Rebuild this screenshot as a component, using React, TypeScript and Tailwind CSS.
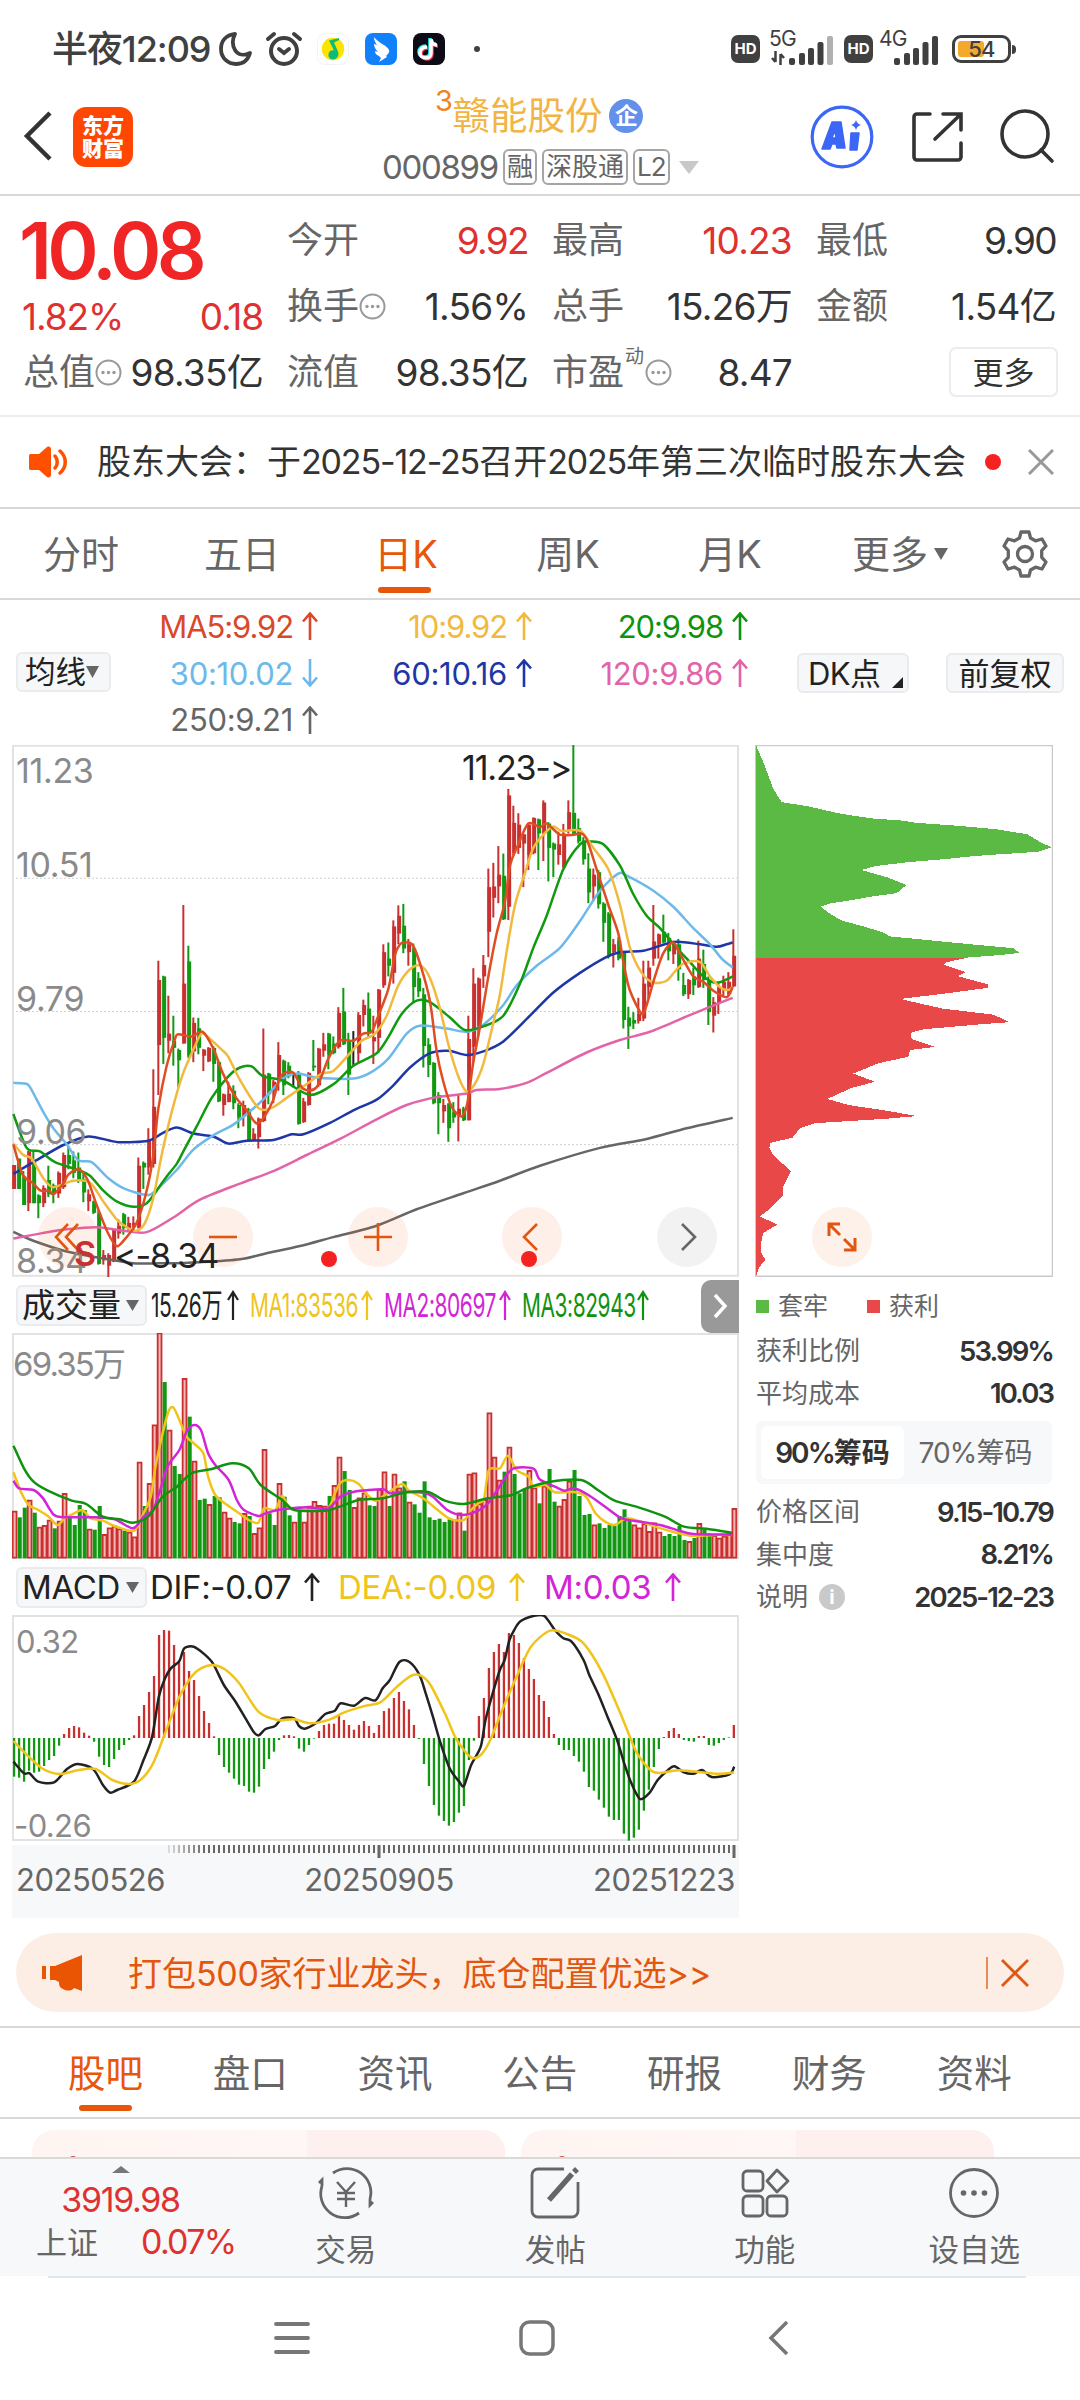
import type { ReactNode } from "react";

type Candle = [number, number, number?, number?];

const UP = "#c93030";
const DOWN = "#129812";

// r = up day, g = down day, k = flat
const CANDLE_SIDES = [
  "rggrggrggr", "rggggrggrr", "rrgrrrgrrr", "grggrgrgrr", "ggrrggrgrr",
  "rgrrggkgrr", "grrggrggkr", "rgrrrgrrgr", "ggggggrggr", "grrrrrrrgr",
  "rrrrrgrggr", "rrggggrggg", "rggggrrrrr", "ggrggrgrgg", "rrrrr",
].join("");

// high, low, body top, body bottom
const CANDLES: Candle[] = [
  [1218, 1285], [1200, 1285], [1235, 1330, 1250, 1330], [1178, 1347, 1180, 1325], [1180, 1325, 1210, 1325], [1300, 1367, 1303, 1325], [1275, 1336, 1282, 1325],
  [1220, 1308, 1260, 1300], [1270, 1325, 1275, 1300], [1236, 1310, 1240, 1298], [1183, 1285, 1190, 1280], [1165, 1230, 1190, 1215], [1180, 1255, 1205, 1240],
  [1183, 1268, 1225, 1262], [1240, 1322, 1258, 1295], [1286, 1347, 1300, 1320], [1318, 1355, 1322, 1352], [1345, 1497, 1355, 1495], [1456, 1497, 1470, 1485],
  [1465, 1532, 1470, 1500], [1395, 1490, 1400, 1488], [1370, 1424, 1388, 1410], [1352, 1413, 1356, 1395], [1363, 1400, 1380, 1395], [1362, 1400, 1380, 1392],
  [1197, 1395, 1220, 1395], [1208, 1285, 1212, 1225], [1115, 1245, 1150, 1225], [950, 1225, 1055, 1215], [646, 1022, 700, 882], [688, 935, 690, 862],
  [744, 905, 850, 870], [800, 940, 870, 890], [892, 1000, 896, 925], [490, 878, 710, 878], [604, 918, 648, 912], [805, 930, 820, 900], [806, 908, 835, 890],
  [893, 955, 895, 912], [888, 930, 890, 928], [885, 985, 890, 935], [925, 1042, 930, 1040], [1018, 1080, 1020, 1050], [985, 1042, 1018, 1042],
  [995, 1062, 1010, 1045], [1045, 1115, 1050, 1085], [1038, 1110, 1050, 1080], [1058, 1150, 1062, 1148], [1115, 1150, 1130, 1148], [1085, 1172, 1088, 1140],
  [836, 1098, 965, 1095], [960, 1048, 962, 1020], [980, 1045, 985, 1012], [874, 1010, 910, 982], [923, 1022, 926, 995], [930, 975, 940, 970], [960, 1000],
  [955, 1105, 960, 1103], [1030, 1100, 1040, 1098], [958, 1052, 960, 1050], [868, 955, 940, 945], [890, 1000, 892, 995], [848, 915, 880, 898],
  [848, 950, 850, 908], [858, 908, 878, 905], [776, 892, 792, 888], [722, 882, 788, 880], [848, 1022, 870, 965], [843, 940], [790, 935, 798, 905],
  [755, 830, 770, 798], [735, 862, 780, 850], [800, 935, 860, 872], [725, 905, 727, 862], [600, 722, 622, 715], [595, 690, 640, 660], [533, 710, 550, 680],
  [491, 600, 520, 570], [487, 625, 548, 612], [585, 660, 600, 622], [598, 765, 612, 720], [678, 748, 695, 732], [722, 945, 740, 885], [863, 972, 880, 938],
  [930, 1048, 932, 1045], [1014, 1132, 1022, 1045], [1033, 1100, 1050, 1068], [1045, 1153, 1046, 1115], [1042, 1100, 1070, 1085], [1022, 1152, 1060, 1080],
  [1055, 1095, 1060, 1093], [800, 1093, 865, 1093], [667, 930, 710, 887], [693, 858, 696, 830], [630, 722, 658, 690], [388, 636, 440, 565],
  [372, 525, 438, 470], [325, 485, 405, 438], [346, 532, 408, 530], [165, 532, 183, 495], [212, 350, 260, 345], [233, 347, 265, 330], [290, 440, 292, 318],
  [260, 392, 265, 350], [245, 348, 246, 345], [248, 392, 250, 290], [197, 367, 203, 290], [258, 424, 262, 330], [315, 412, 318, 335], [285, 377, 320, 350],
  [263, 387, 290, 385], [197, 290, 230, 282], [42, 297, 232, 290], [248, 318, 275, 312], [300, 377, 310, 362], [345, 485, 388, 455], [388, 478, 405, 438],
  [392, 500, 398, 488], [482, 593, 486, 540], [510, 640, 514, 630], [585, 665, 600, 622], [580, 645, 590, 640], [620, 836, 622, 812], [775, 893, 805, 830],
  [790, 837, 812, 822], [750, 822, 795, 815], [646, 815, 710, 808], [646, 752, 665, 720], [490, 660, 592, 640], [570, 640, 572, 600], [517, 597, 565, 595],
  [568, 645, 582, 620], [590, 655, 600, 628], [585, 702, 600, 670], [680, 745, 714, 740], [697, 753, 700, 740], [665, 742, 690, 715], [590, 722, 640, 720],
  [615, 722, 655, 700], [690, 826, 700, 790], [748, 847, 762, 800], [705, 795, 720, 765], [688, 748, 705, 728], [678, 745, 705, 740], [558, 720, 632, 718],
];

const PRICE_LINES = [
  { color: "#666666", pts: "40,1405 100,1430 200,1460 300,1478 400,1493 500,1493 600,1490 720,1482 800,1465 900,1445 1000,1420 1130,1388 1250,1342 1390,1297 1500,1262 1620,1220 1800,1170 1940,1145 2060,1115 2198,1086" },
  { color: "#e263a7", pts: "40,1424 130,1408 200,1398 290,1392 370,1402 440,1406 520,1365 600,1315 720,1270 820,1235 920,1190 1020,1145 1130,1090 1220,1050 1310,1028 1400,1018 1430,1008 1500,1005 1580,988 1640,960 1760,903 1860,868 1950,845 2060,802 2130,775 2198,750" },
  { color: "#1e36a6", pts: "40,1243 100,1210 190,1162 265,1138 355,1154 445,1150 485,1130 530,1113 580,1130 640,1138 685,1158 740,1150 820,1148 875,1132 910,1132 990,1100 1060,1065 1130,1035 1180,995 1230,945 1290,905 1345,898 1400,910 1450,900 1510,872 1590,800 1660,735 1740,680 1820,635 1860,622 1930,618 1980,604 2030,593 2100,600 2150,607 2180,600 2198,595" },
  { color: "#6cb9ea", pts: "40,988 75,990 90,1000 130,1070 160,1115 200,1160 235,1205 275,1210 325,1255 375,1285 445,1302 475,1282 530,1232 580,1175 640,1135 700,1105 760,1060 800,1025 850,975 895,962 950,973 1060,976 1110,960 1165,920 1220,850 1260,828 1340,836 1400,845 1450,825 1510,770 1550,715 1610,660 1680,610 1740,535 1800,450 1855,402 1880,408 1960,450 2020,495 2080,555 2130,600 2165,640 2198,665" },
  { color: "#109a0f", pts: "40,1075 80,1170 120,1180 165,1210 235,1232 270,1248 310,1290 350,1320 400,1335 440,1325 470,1290 500,1250 530,1215 550,1180 590,1110 635,1030 685,970 720,945 755,942 790,970 850,982 930,1022 1000,992 1060,940 1130,905 1165,860 1205,795 1250,758 1290,762 1350,805 1395,840 1450,830 1510,800 1560,710 1600,610 1640,520 1690,390 1740,320 1770,312 1810,320 1860,380 1900,460 1940,520 1980,555 2030,610 2070,650 2110,690 2150,708 2198,690" },
  { color: "#f2b93f", pts: "40,1158 70,1190 95,1200 130,1255 160,1280 220,1262 270,1268 310,1320 350,1370 385,1395 410,1402 435,1380 460,1310 485,1190 515,1070 548,965 580,895 605,850 630,865 665,895 685,915 720,980 775,1058 815,1058 860,1030 930,985 965,962 1000,955 1050,905 1085,870 1125,850 1160,800 1195,715 1230,670 1262,660 1290,695 1320,780 1345,880 1375,970 1400,1012 1425,990 1450,935 1480,820 1500,740 1520,620 1545,490 1575,400 1600,330 1635,288 1660,270 1685,283 1720,280 1745,285 1780,330 1825,390 1860,490 1890,610 1925,680 1960,707 2000,702 2030,670 2055,652 2100,650 2130,690 2160,720 2185,728 2198,720" },
  { color: "#df4d23", pts: "40,1160 68,1245 98,1268 122,1290 148,1290 160,1300 190,1270 205,1245 235,1230 262,1258 290,1330 322,1405 350,1445 375,1425 410,1380 440,1290 460,1190 475,1060 500,940 525,865 535,852 575,858 608,845 640,892 668,960 705,1025 740,1065 770,1102 795,1080 820,1035 835,985 850,962 880,960 910,1005 950,1000 985,920 1020,870 1060,870 1090,850 1115,845 1135,800 1165,725 1185,630 1200,600 1215,594 1238,602 1262,660 1290,760 1310,900 1330,985 1355,1055 1385,1082 1402,1045 1420,930 1440,830 1465,690 1490,570 1515,480 1530,380 1555,320 1585,262 1620,272 1640,262 1680,293 1720,293 1745,290 1762,310 1790,390 1825,490 1855,570 1872,660 1890,730 1925,795 1940,770 1965,690 1990,625 2020,595 2045,635 2080,690 2110,705 2140,730 2180,748 2198,720" },
];

const VOLUME =
  "r695 g712 g683 r662 g698 r743 r738 r722 g745 r725 r642 g712 g735 g675 g690 r749 g749 g678 r765 r745 r740 r748 g752 r758 r772 r548 g678 r612 r436 r160 g306 r452 g558 g582 r297 g410 r545 g660 g656 r675 g648 g652 r698 r716 g726 g730 r702 g708 r762 r745 r510 g700 g735 r612 g650 g706 r728 g680 r728 r680 r666 r678 r680 g648 r618 r533 g573 g630 r684 r655 r640 g676 g678 r630 r577 g678 r584 r625 g604 r668 g673 g698 g604 g712 g720 g716 g726 g718 r720 r700 g752 r584 r580 r672 r660 r400 r533 r602 g575 r503 g582 g640 g628 r573 r625 g670 r620 g567 g665 r680 r660 r605 g570 g648 g705 g702 r736 g730 g744 g735 g738 g708 g688 g715 r736 r745 r732 r756 r730 r758 g768 g762 g768 g738 g780 r786 g774 r732 g748 g760 r768 r776 r770 r760 r687".split(" ");

const VOLUME_LINES = [
  { color: "#f0c419", pts: "28,577 45,640 60,675 80,690 100,708 120,735 135,715 155,700 172,690 190,715 215,722 240,738 280,752 300,700 315,650 325,560 340,460 352,395 362,382 375,420 390,470 405,490 425,520 435,590 450,645 475,675 500,700 520,720 540,728 552,685 575,690 590,648 605,682 640,690 685,685 700,640 712,608 730,600 750,612 765,640 785,662 805,645 840,612 855,632 885,655 905,678 940,716 970,720 985,690 1000,670 1012,655 1022,570 1045,565 1062,527 1080,570 1105,590 1115,620 1140,615 1160,637 1200,636 1225,650 1245,700 1265,725 1285,735 1310,715 1340,725 1370,740 1410,757 1450,768 1500,764 1530,765" },
  { color: "#d224d8", pts: "28,602 40,625 70,630 90,655 105,690 122,710 200,712 240,718 278,745 300,710 320,690 335,630 350,560 375,510 390,455 405,435 420,450 435,520 450,555 478,600 495,660 510,690 540,708 555,700 590,688 640,682 685,685 712,650 740,635 800,628 815,640 840,636 885,638 905,650 935,690 965,705 1000,692 1020,670 1040,630 1070,568 1115,566 1128,598 1160,620 1180,632 1200,625 1230,645 1265,680 1300,715 1340,725 1380,735 1420,752 1450,762 1530,764" },
  { color: "#0f930f", pts: "28,497 50,565 70,605 100,632 150,662 180,672 215,710 250,718 278,728 310,710 340,650 370,620 400,580 440,568 485,550 520,565 545,615 590,660 615,690 680,692 710,680 750,660 800,655 850,637 895,636 930,662 970,672 1020,655 1070,645 1100,625 1150,605 1215,600 1250,630 1285,662 1330,680 1390,710 1430,740 1480,747 1530,758" },
];

const MACD_BARS = [
  650, 653, 665, 632, 638, 635, 618, 600, 588, 557, 522, 504, 498, 502, 518, 527, 545, 590, 615, 621, 597, 570, 555, 540, 526, 468, 435, 396, 348, 225,
  210, 212, 255, 305, 276, 333, 360, 408, 453, 489, 529, 585, 621, 638, 656, 674, 678, 695, 698, 680, 627, 597, 575, 540, 526, 525, 529, 566, 575, 555,
  536, 513, 495, 491, 491, 468, 480, 495, 509, 495, 483, 498, 519, 495, 453, 445, 414, 396, 423, 448, 495, 537, 612, 678, 735, 767, 783, 797, 786, 758,
  738, 600, 542, 468, 414, 324, 276, 252, 276, 219, 225, 249, 294, 327, 357, 405, 423, 471, 522, 555, 570, 570, 588, 605, 635, 681, 692, 719, 743, 770,
  780, 780, 821, 842, 833, 809, 752, 689, 621, 567, 531, 513, 504, 522, 540, 543, 545, 528, 528, 555, 557, 549, 540, 532, 495,
];

const MACD_LINES = [
  { color: "#222222", pts: "28,605 50,640 62,640 80,665 113,667 140,627 163,612 195,628 215,675 230,698 245,690 280,665 300,600 318,530 332,410 345,355 357,325 375,303 385,265 405,260 425,280 445,310 468,375 490,420 512,472 530,515 541,526 555,507 575,498 590,475 615,475 625,498 637,506 660,490 680,462 700,452 712,430 740,437 763,414 785,421 800,385 815,360 835,306 856,306 877,345 890,400 905,470 920,545 940,625 960,665 970,677 985,615 1005,560 1015,480 1030,400 1045,330 1055,300 1065,240 1075,210 1088,184 1115,168 1138,168 1160,210 1178,235 1195,245 1220,300 1232,345 1250,400 1270,470 1290,540 1305,610 1320,670 1338,717 1357,700 1375,660 1395,632 1410,619 1430,637 1450,641 1468,630 1488,651 1525,643 1535,620" },
  { color: "#f0c419", pts: "28,543 60,590 90,627 125,642 165,630 200,627 235,660 270,672 295,658 320,610 345,520 375,410 400,350 420,325 445,315 470,328 500,370 540,455 580,480 615,478 650,490 690,478 720,457 765,437 795,427 830,380 860,347 880,347 900,375 930,460 955,540 985,592 1005,585 1025,540 1050,450 1080,350 1110,260 1150,212 1185,222 1220,250 1260,340 1300,470 1330,575 1360,630 1380,639 1420,631 1500,641 1535,637" },
];

// catmull-rom through the points
function smooth(pts: string): string {
  const p = pts.split(" ").map((s) => s.split(",").map(Number));
  let d = `M${p[0][0]} ${p[0][1]}`;
  for (let i = 0; i < p.length - 1; i++) {
    const a = p[i - 1] ?? p[i];
    const b = p[i];
    const c = p[i + 1];
    const e = p[i + 2] ?? c;
    d += `C${b[0] + (c[0] - a[0]) / 7} ${b[1] + (c[1] - a[1]) / 7} ${c[0] - (e[0] - b[0]) / 7} ${c[1] - (e[1] - b[1]) / 7} ${c[0]} ${c[1]}`;
  }
  return d;
}

function Lines({ items }: { items: { color: string; pts: string }[] }) {
  return (
    <>
      {items.map((l) => (
        <path key={l.color} d={smooth(l.pts)} fill="none" stroke={l.color} strokeWidth="2.500" strokeLinejoin="round" vectorEffect="non-scaling-stroke" />
      ))}
    </>
  );
}

function Arrow({ down = false }: { down?: boolean }) {
  return (
    <svg width="16" height="28" viewBox="0 0 16 28" fill="none" stroke="currentColor" strokeWidth="2.600" className={down ? "rotate-180 shrink-0" : "shrink-0"}>
      <path d="M8 28V2M1 9.500 8 1.500 15 9.500" />
    </svg>
  );
}

function MoreDots() {
  return (
    <svg width="27" height="27" viewBox="0 0 27 27" className="shrink-0">
      <circle cx="13.500" cy="13.500" r="12" fill="none" stroke="#999" strokeWidth="2" />
      <g fill="#999">
        <circle cx="8" cy="13.500" r="1.700" />
        <circle cx="13.500" cy="13.500" r="1.700" />
        <circle cx="19" cy="13.500" r="1.700" />
      </g>
    </svg>
  );
}

function Signal({ weak = false }: { weak?: boolean }) {
  return (
    <svg width="44" height="29" viewBox="0 0 44 29" fill="#404040">
      <rect x="0" y="22" width="6" height="7" rx="2" />
      <rect x="10" y="17" width="6" height="12" rx="2" />
      <rect x="19" y="12" width="6" height="17" rx="2" />
      <rect x="28.500" y="6" width="6" height="23" rx="2" />
      <rect x="38" y="0" width="6" height="29" rx="2" fill={weak ? "#b0b0b0" : "#404040"} />
    </svg>
  );
}

function StatusBar() {
  return (
    <div className="relative h-[84px] flex items-center pt-[14px] pl-[52px] text-[#404040]">
      <span className="text-[36px] font-medium tracking-[-0.03em] w-[166px] whitespace-nowrap">半夜12:09</span>
      <svg width="34" height="36" viewBox="0 0 34 36" fill="none" stroke="#404040" strokeWidth="3.800" strokeLinejoin="round">
        <path d="M17 3C8 4 3 10 3 18c0 9 7 15 15 15 7 0 12-4 14-11-6 3-12 2-15-3-3-5-3-10 0-16z" />
      </svg>
      <svg width="38" height="38" viewBox="0 0 38 38" fill="none" stroke="#404040" strokeWidth="4" strokeLinecap="round" className="ml-[13px]">
        <circle cx="19" cy="21" r="13" />
        <path d="M3 9 9 4M35 9 29 4M14 19l5 4 5-4" />
      </svg>
      <svg width="32" height="32" viewBox="0 0 32 32" className="ml-[14px]">
        <rect x=".5" y=".5" width="31" height="31" rx="8" fill="#fff" stroke="#f3f3f3" />
        <circle cx="16" cy="16" r="11.200" fill="#fce300" />
        <path d="M12 7.500 22 5v2l-5 2.500 4 9c1.500 4-1 8-5 8s-5.500-4-4-7c1-2 3-2.500 5-2l-3-6z" fill="#0dbb78" />
      </svg>
      <svg width="32" height="32" viewBox="0 0 32 32" className="ml-[16px]">
        <rect width="32" height="32" rx="8" fill="#1180fb" />
        <path d="M9 4c4 6 13 8 15 13 1 2-1 4-3 6l1 1-8 5 2-4-2-2c-3-1-4-3-4-5l3 1c-3-3-4-6-4-8l3 1c-2-3-3-5-3-8z" fill="#fff" />
      </svg>
      <svg width="32" height="32" viewBox="0 0 32 32" className="ml-[16px]">
        <rect width="32" height="32" rx="8" fill="#0d0b16" />
        <g fill="none" strokeWidth="3.600">
          <path d="M14 14c-5 0-7 3-7 6s3 5 6 5 5-2 5-5V6c0 4 3 6 6 6" stroke="#29ece9" transform="translate(-1 -1)" />
          <path d="M14 14c-5 0-7 3-7 6s3 5 6 5 5-2 5-5V6c0 4 3 6 6 6" stroke="#fb2c55" transform="translate(1 1)" />
          <path d="M14 14c-5 0-7 3-7 6s3 5 6 5 5-2 5-5V6c0 4 3 6 6 6" stroke="#fff" />
        </g>
      </svg>
      <span className="ml-[29px] size-[6px] rounded-full bg-[#404040]" />

      <div className="ml-auto mr-[69px] flex items-center">
        <span className="w-[29px] h-[28px] rounded-[7px] bg-[#404040] text-white text-[15px] font-bold flex items-center justify-center">HD</span>
        <div className="relative ml-[11px] w-[62px] h-[32px] flex items-end justify-end">
          <span className="absolute -left-0.5 top-[-5px] text-[21px] leading-[22px] tracking-[-0.04em]">5G</span>
          <svg width="14" height="14" viewBox="0 0 14 14" fill="none" stroke="#404040" strokeWidth="2.500" className="absolute left-0 bottom-0">
            <path d="M4.500 0v11M1 7l3.500 4M9.500 14V3M13 7 9.500 3" />
          </svg>
          <Signal weak />
        </div>
        <span className="ml-[11px] w-[29px] h-[28px] rounded-[7px] bg-[#404040] text-white text-[15px] font-bold flex items-center justify-center">HD</span>
        <div className="relative ml-[6px] w-[59px] h-[32px] flex items-end justify-end">
          <span className="absolute left-0 top-[-5px] text-[21px] leading-[22px] tracking-[-0.04em]">4G</span>
          <Signal />
        </div>
        <div className="relative ml-[14px] w-[59px] h-[28px] rounded-[9px] border-[3px] border-[#404040] p-[3px]">
          <div className="w-[26px] h-[16px] rounded-[3px] bg-[#f3a92c]" />
          <span className="absolute inset-0 flex items-center justify-center text-[22px] leading-none font-medium tracking-[-0.04em]">54</span>
          <span className="absolute right-[-8px] top-[7px] w-[4px] h-[9px] rounded-r bg-[#404040]" />
        </div>
      </div>
    </div>
  );
}

function Tag({ children }: { children: ReactNode }) {
  return <span className="h-[36px] px-[2px] border-2 border-[#a5a5a5] rounded-[6px] text-[26px] leading-[31px] text-[#666]">{children}</span>;
}

function Header() {
  return (
    <header className="h-[112px] border-b-2 border-[#d9d9d9] flex items-start">
      <svg width="30" height="50" viewBox="0 0 30 50" fill="none" stroke="#333" strokeWidth="4.500" className="ml-[23px] mt-[27px]">
        <path d="M27 2 4 25l23 23" />
      </svg>
      <div className="ml-[20px] mt-[23px] size-[60px] rounded-[13px] bg-[#ff4603] text-white text-[21px] leading-[23px] font-black flex flex-col items-center justify-center">
        <span>东方</span>
        <span>财富</span>
      </div>
      <div className="ml-[237px] w-[330px]">
        <div className="flex items-center h-[52px] pl-[67px] pt-[12px]">
          <span className="text-[29px] leading-none text-[#ee8420] -translate-y-[16px] -ml-[2px] mr-[1px] tracking-tighter">3</span>
          <span className="text-[37.500px] leading-none text-[#f2b544]">赣能股份</span>
          <span className="ml-[7px] size-[34px] rounded-full bg-[#6290ea] text-white text-[23px] leading-none font-bold flex items-center justify-center">企</span>
        </div>
        <div className="flex items-center gap-[5px] mt-[13px] pl-[12px] whitespace-nowrap">
          <span className="text-[33px] leading-none text-[#666] tracking-[-0.04em] w-[116px]">000899</span>
          <Tag>融</Tag>
          <Tag>深股通</Tag>
          <Tag>
            <span className="tracking-[-0.04em]">L2</span>
          </Tag>
          <svg width="20" height="13" viewBox="0 0 20 13" className="ml-[4px]">
            <path d="M0 0h20L10 13z" fill="#c8c8c8" />
          </svg>
        </div>
      </div>
      <svg width="64" height="64" viewBox="0 0 64 64" fill="none" className="ml-[110px] mt-[21px]">
        <circle cx="32" cy="32" r="29.800" stroke="#3c66f5" strokeWidth="3.200" />
        <path fillRule="evenodd" d="M22 17h9l4 26h-8l-1-4h-4l-2 5h-8zM25 25l-3 8h4z" fill="#3c66f5" stroke="#3c66f5" strokeWidth="1.500" strokeLinejoin="round" />
        <path d="M41 28h8l-2 17h-7z" fill="#3c66f5" stroke="#3c66f5" strokeWidth="1.500" strokeLinejoin="round" />
        <path d="M46 15c1 3 2 4 5 5-3 1-4 2-5 5-1-3-2-4-5-5 3-1 4-2 5-5z" fill="#3c66f5" />
      </svg>
      <svg width="54" height="54" viewBox="0 0 54 54" fill="none" stroke="#333" strokeWidth="3.600" strokeLinecap="round" className="ml-[36px] mt-[26px]">
        <path d="M20 4H7a3 3 0 0 0-3 3v40a3 3 0 0 0 3 3h41a3 3 0 0 0 3-3V33M33 4h18v16M50 5 25 29" />
      </svg>
      <svg width="56" height="56" viewBox="0 0 56 56" fill="none" stroke="#333" strokeWidth="3.600" strokeLinecap="round" className="ml-[35px] mt-[25px]">
        <circle cx="26" cy="25" r="23" />
        <path d="M42 41l11 11" />
      </svg>
    </header>
  );
}

function Stat({ label, value, red = false, dots = false }: { label: ReactNode; value: string; red?: boolean; dots?: boolean }) {
  return (
    <div className="flex items-center justify-between h-[66px] whitespace-nowrap">
      <span className="text-[36px] text-[#666] flex items-center -ml-[1px]">
        {label}
        {dots && <MoreDots />}
      </span>
      <span className={`text-[37px] ${value.includes("9.9") ? "tracking-[-0.045em]" : "tracking-[-0.02em]"} ${red ? "text-[#e03131]" : "text-[#333]"}`}>{value}</span>
    </div>
  );
}

function Quote() {
  return (
    <section className="h-[221px] border-b-2 border-[#ededed] pl-[24px] pr-[24px] pt-[11px] grid grid-cols-[239px_240px_239px_239px] gap-x-[25px] content-start leading-none">
      <div>
        <div className="h-[87px] -ml-[5px] flex items-center text-[78px] font-semibold text-[#f02525] tracking-[-0.06em]">10.08</div>
        <div className="h-[45px] -ml-[2px] flex items-center justify-between text-[37px] text-[#e03131] tracking-[-0.03em]">
          <span>1.82%</span>
          <span>0.18</span>
        </div>
        <Stat label="总值" value="98.35亿" dots />
      </div>
      <div>
        <Stat label="今开" value="9.92" red />
        <Stat label="换手" value="1.56%" dots />
        <Stat label="流值" value="98.35亿" />
      </div>
      <div>
        <Stat label="最高" value="10.23" red />
        <Stat label="总手" value="15.26万" />
        <Stat
          label={
            <>
              市盈
              <span className="text-[19px] -translate-y-[16px] mx-[1px]">动</span>
            </>
          }
          value="8.47"
          dots
        />
      </div>
      <div>
        <Stat label="最低" value="9.90" />
        <Stat label="金额" value="1.54亿" />
        <div className="h-[66px] flex items-center justify-end">
          <span className="w-[109px] h-[50px] border-2 border-[#ececec] rounded-[7px] flex items-center justify-center text-[31px] text-[#333] -mr-[2px]">更多</span>
        </div>
      </div>
    </section>
  );
}

function News() {
  return (
    <section className="h-[92px] border-b-2 border-[#d9d9d9] flex items-center leading-none">
      <svg width="40" height="32" viewBox="0 0 40 32" className="ml-[29px]">
        <path d="M2 8h8L18 1c2-1 4 0 4 2v26c0 2-2 3-4 2l-8-7H2c-2 0-2-1-2-2V10c0-1 0-2 2-2z" fill="#ff5000" />
        <path d="M26 10c3 3 3 9 0 12M31 5c7 6 7 16 0 22" fill="none" stroke="#ff5000" strokeWidth="3.500" strokeLinecap="round" />
      </svg>
      <span className="ml-[28px] w-[871px] text-[34px] text-[#333] whitespace-nowrap">
        股东大会：于<span className="tracking-[-0.034em]">2025-12-25</span>召开<span className="tracking-[-0.034em]">2025</span>年第三次临时股东大会
      </span>
      <span className="ml-[17px] size-[16px] rounded-full bg-[#f52222]" />
      <svg width="26" height="26" viewBox="0 0 26 26" fill="none" stroke="#999" strokeWidth="3" className="ml-[27px]">
        <path d="M1 1l24 24M25 1 1 25" />
      </svg>
    </section>
  );
}

function PeriodTabs() {
  return (
    <nav className="relative h-[91px] border-b-2 border-[#d9d9d9] flex items-center text-[38px] leading-none text-[#666]">
      <span className="w-[162px] text-center">分时</span>
      <span className="w-[160px] text-center">五日</span>
      <span className="relative w-[168px] text-center text-[#e8560a]">
        日K
        <i className="absolute left-[56px] -bottom-[20px] w-[53px] h-[6px] rounded-full bg-[#e8560a]" />
      </span>
      <span className="w-[156px] text-center">周K</span>
      <span className="w-[168px] text-center">月K</span>
      <span className="ml-[38px]">更多</span>
      <svg width="14" height="12" viewBox="0 0 14 12" className="ml-[6px]">
        <path d="M0 0h14L7 12z" fill="#666" />
      </svg>
      <svg width="50" height="50" viewBox="0 0 50 50" fill="none" stroke="#666" strokeWidth="3.300" strokeLinejoin="round" className="ml-[52px]">
        <path d="M21 3h8l1.500 6 5 2.800L42 10l4 7-4.300 4.700v6.600L46 33l-4 7-6.500-1.800-5 2.800-1.500 6h-8l-1.500-6-5-2.800L8 40l-4-7 4.300-4.700v-6.600L4 17l4-7 6.500 1.800 5-2.800z" />
        <circle cx="25" cy="25" r="7.500" />
      </svg>
    </nav>
  );
}

function MaValue({ text, color, down = false }: { text: string; color: string; down?: boolean }) {
  return (
    <span className={`flex items-center justify-end gap-[9px] h-[46.700px] ${text.includes("9.9") ? "tracking-[-0.035em]" : "tracking-[-0.01em]"} ${color}`}>
      {text}
      <Arrow down={down} />
    </span>
  );
}

function MaBar() {
  return (
    <section className="relative h-[145px] pt-[3px] flex text-[31px] leading-none whitespace-nowrap">
      <button className="ml-[16px] mt-[49px] w-[95px] h-[40px] rounded-[6px] border-2 border-[#e9ebee] bg-[#f6f7f9] text-[#222] flex items-center pl-[7px]">
        <span className="text-[30.500px] leading-none">均线</span>
        <svg width="13" height="12" viewBox="0 0 13 12">
          <path d="M0 0h13L6.500 12z" fill="#666" />
        </svg>
      </button>
      <div className="grid grid-cols-[207px_214px_216px] content-start">
        <MaValue text="MA5:9.92" color="text-[#d9482b]" />
        <MaValue text="10:9.92" color="text-[#f2b93f]" />
        <MaValue text="20:9.98" color="text-[#0f930f]" />
        <MaValue text="30:10.02" color="text-[#6cb9ea]" down />
        <MaValue text="60:10.16" color="text-[#1e36a6]" />
        <MaValue text="120:9.86" color="text-[#e263a7]" />
        <MaValue text="250:9.21" color="text-[#666]" />
      </div>
      <button className="relative ml-[49px] mt-[50px] w-[112px] h-[40px] rounded-[6px] border-2 border-[#e9ebee] bg-[#f6f7f9] text-[#222] pl-[9px] text-left">
        <span className="tracking-[-0.02em]">DK点</span>
        <svg width="11" height="11" viewBox="0 0 11 11" className="absolute right-[4px] bottom-[3px]">
          <path d="M11 0v11H0z" fill="#222" />
        </svg>
      </button>
      <button className="ml-[37px] mt-[50px] w-[118px] h-[40px] rounded-[6px] border-2 border-[#e9ebee] bg-[#f6f7f9] text-[#222]">前复权</button>
    </section>
  );
}

function RoundButton({ children, className }: { children: ReactNode; className: string }) {
  return (
    <button className={`absolute top-[462px] size-[60px] rounded-full flex items-center justify-center ${className}`}>
      <svg width="32" height="32" viewBox="0 0 32 32" fill="none" stroke="currentColor" strokeWidth="2.600">
        {children}
      </svg>
    </button>
  );
}

function PriceChart() {
  return (
    <div className="relative h-[532px] text-[34px] leading-none tracking-[-0.01em]">
      <svg className="absolute inset-0 size-full" viewBox="36 42 2181 1489.600" preserveAspectRatio="none">
        <g stroke="#cfcfcf" strokeDasharray="2 2">
          {[415, 788, 1161].map((y) => (
            <line key={y} x1="36" x2="2217" y1={y} y2={y} vectorEffect="non-scaling-stroke" />
          ))}
        </g>
        <rect x="39" y="44" width="2175" height="1484" fill="none" stroke="#e2e2e2" strokeWidth="2" vectorEffect="non-scaling-stroke" />
        {CANDLES.map(([high, low, top = high, bottom = low], i) => {
          const x = 37 + i * 15;
          const side = CANDLE_SIDES[i];
          const fill = side === "k" ? "#222" : side === "r" ? UP : DOWN;
          return (
            <g key={i} fill={fill}>
              <rect x={x} y={high} width="6" height={low - high} />
              {side !== "k" && <rect x={x} y={top} width="11.500" height={bottom - top} />}
            </g>
          );
        })}
        <Lines items={PRICE_LINES} />
      </svg>
      <div className="absolute left-[4px] top-[9px] text-[#8a8a8a]">
        <p className="h-[94px]">11.23</p>
        <p className="h-[134px]">10.51</p>
        <p className="h-[133px]">9.79</p>
        <p className="h-[129px]">9.06</p>
        <p>8.34</p>
      </div>
      <span className="absolute left-[450px] top-[6px] text-[#222] tracking-[-0.035em]">11.23-&gt;</span>
      <RoundButton className="left-[26px] bg-[#f5651b]/10 text-[#e2570f]">
        <path d="M16 3 4 16l12 13M26 3 14 16l12 13" />
      </RoundButton>
      <RoundButton className="left-[181px] bg-[#f5651b]/10 text-[#e2570f]">
        <path d="M2 16h28" />
      </RoundButton>
      <RoundButton className="left-[336px] bg-[#f5651b]/10 text-[#e2570f]">
        <path d="M2 16h28M16 2v28" />
      </RoundButton>
      <RoundButton className="left-[490px] bg-[#f5651b]/10 text-[#e2570f]">
        <path d="M21 3 8 16l13 13" />
      </RoundButton>
      <RoundButton className="left-[645px] bg-black/5 text-[#666]">
        <path d="M11 3l13 13-13 13" />
      </RoundButton>
      <span className="absolute left-[62px] top-[492px] text-[34px] font-semibold text-[#c93030]">S</span>
      <span className="absolute left-[102px] top-[494px] text-[#222] tracking-[-0.03em]">&lt;-8.34</span>
      <i className="absolute left-[309px] top-[506px] size-[16px] rounded-full bg-[#f52222]" />
      <i className="absolute left-[509px] top-[506px] size-[16px] rounded-full bg-[#f52222]" />
    </div>
  );
}

function Squeezed({ text, color, className }: { text: string; color: string; className: string }) {
  return (
    <span className={`flex items-center justify-between ${className} ${color}`}>
      <span className="w-0 scale-x-[0.635] origin-left tracking-[-0.02em]">
        <span className="block w-max">{text}</span>
      </span>
      <svg width="12" height="30" viewBox="0 0 12 30" fill="none" stroke="currentColor" strokeWidth="2.200">
        <path d="M6 30V2M1 10l5-8 5 8" />
      </svg>
    </span>
  );
}

function IndicatorSelect({ name }: { name: string }) {
  return (
    <button className="ml-[4px] w-[131px] h-[41px] rounded-[6px] border-2 border-[#e9ebee] bg-[#f6f7f9] text-[#222] flex items-center justify-between pl-[4px] pr-[6px]">
      {name}
      <svg width="13" height="11" viewBox="0 0 13 11">
        <path d="M0 0h13L6.500 11z" fill="#666" />
      </svg>
    </button>
  );
}

function VolumeChart() {
  return (
    <>
      <div className="h-[56px] flex items-center text-[33px] leading-none text-[#222] whitespace-nowrap">
        <IndicatorSelect name="成交量" />
        <Squeezed text="15.26万" color="text-[#222]" className="ml-[4px] w-[88px]" />
        <Squeezed text="MA1:83536" color="text-[#f0c419]" className="ml-[11px] w-[123px]" />
        <Squeezed text="MA2:80697" color="text-[#d224d8]" className="ml-[11px] w-[127px]" />
        <Squeezed text="MA3:82943" color="text-[#0f930f]" className="ml-[11px] w-[127px]" />
        <div className="ml-auto mt-[2px] w-[38px] h-[53px] rounded-l-[10px] bg-[#999] flex items-center justify-center">
          <svg width="16" height="34" viewBox="0 0 16 34" fill="none" stroke="#fff" strokeWidth="3.500">
            <path d="M3 6l10 11L3 28" />
          </svg>
        </div>
      </div>
      <div className="relative h-[226px]">
        <svg className="absolute inset-0 size-full" viewBox="25 159 1520 678" preserveAspectRatio="none">
          <rect x="27" y="162" width="1516" height="672" fill="none" stroke="#e2e2e2" strokeWidth="2" vectorEffect="non-scaling-stroke" />
          {VOLUME.map((v, i) => {
            const x = 30 + i * 10.45;
            const y = Number(v.slice(1));
            return v[0] === "r" ? (
              <rect key={i} x={x - 3.5} y={y} width="8" height={833 - y} fill="#f6b9b7" stroke={UP} strokeWidth="1.800" vectorEffect="non-scaling-stroke" />
            ) : (
              <rect key={i} x={x - 3.5} y={y} width="8.500" height={835 - y} fill="#129812" />
            );
          })}
          <Lines items={VOLUME_LINES} />
        </svg>
        <span className="absolute left-[1px] top-[15px] text-[33px] leading-none tracking-[-0.055em] text-[#8a8a8a]">69.35万</span>
      </div>
    </>
  );
}

function MacdChart() {
  return (
    <>
      <div className="h-[56px] flex items-center text-[33px] leading-none text-[#222] whitespace-nowrap tracking-[-0.01em]">
        <IndicatorSelect name="MACD" />
        <span className="ml-[3px] w-[170px] flex items-center justify-between">
          DIF:-0.07
          <Arrow />
        </span>
        <span className="ml-[18px] w-[187px] flex items-center justify-between text-[#f0c419]">
          DEA:-0.09
          <Arrow />
        </span>
        <span className="ml-[19px] w-[137px] flex items-center justify-between text-[#d224d8]">
          M:0.03
          <Arrow />
        </span>
      </div>
      <div className="relative h-[226px] text-[31px] leading-none tracking-[-0.02em] text-[#8a8a8a]">
        <svg className="absolute inset-0 size-full" viewBox="25 165 1520 678" preserveAspectRatio="none">
          <rect x="27" y="168" width="1516" height="672" fill="none" stroke="#e2e2e2" strokeWidth="2" vectorEffect="non-scaling-stroke" />
          {MACD_BARS.map((y, i) => (
            <rect key={i} x={27 + i * 10.45} y={Math.min(y, 534)} width="4.800" height={Math.abs(y - 534)} fill={y < 534 ? UP : DOWN} />
          ))}
          <Lines items={MACD_LINES} />
        </svg>
        <span className="absolute left-[4px] top-[11px]">0.32</span>
        <span className="absolute left-[2px] top-[195px]">-0.26</span>
      </div>
    </>
  );
}

function DateAxis() {
  return (
    <div className="mt-[4px] h-[73px] bg-[#f7f8fa] text-[#666] text-[31px] leading-none tracking-[-0.015em]">
      <svg width="727" height="14" viewBox="12 0 727 14" stroke="#666" strokeWidth="2">
        {Array.from({ length: 114 }, (_, i) => {
          const x = 734 - i * 5;
          const major = i === 0 || i === 71;
          return <line key={i} x1={x} x2={x} y1="0" y2={major ? 13 : 8} opacity={Math.min(1, (x - 160) / 45)} strokeWidth={major ? 3 : 2} />;
        })}
      </svg>
      <div className="flex justify-between pl-[4px] pr-[4px] pt-[5px]">
        <span>20250526</span>
        <span>20250905</span>
        <span>20251223</span>
      </div>
    </div>
  );
}

function ChipRow({ label, value }: { label: ReactNode; value: string }) {
  return (
    <div className="h-[42.500px] flex items-center justify-between">
      <span className="flex items-center text-[26px] text-[#666] ml-[1px]">{label}</span>
      <span className="text-[27.500px] font-semibold text-[#333] tracking-[-0.07em]">{value}</span>
    </div>
  );
}

function Chips() {
  return (
    <div className="ml-[16px] w-[298px] leading-none">
      <div className="relative h-[532px]">
        <svg className="absolute inset-0 size-full" viewBox="45 42 894 1489.600" preserveAspectRatio="none">
          <rect x="46.500" y="43.500" width="891" height="1486" fill="none" stroke="#c9c9c9" strokeWidth="1.500" vectorEffect="non-scaling-stroke" />
          <g shapeRendering="crispEdges">
            <path fill="#5aba43" d="M48 42 72 95 100 165 125 202 200 213 305 235 400 248 480 253 530 260 650 268 770 278 862 292 908 318 936 328 896 341 745 350 680 355 620 361 505 370 450 376 405 381 365 392 440 412 499 434 470 457 405 465 335 476 270 486 242 495 275 518 310 535 375 551 432 568 450 578 550 587 670 598 820 611 838 624 780 630 685 637H48z" />
            <path fill="#e84848" d="M48 637H685L620 650 612 658 678 678 652 689 743 712 743 722 606 739 480 753 550 768 608 780 760 797 809 818 735 823 550 838 512 848 515 865 586 887 510 896 505 915 415 933 340 962 405 985 335 1002 262 1033 325 1050 440 1066 530 1081 445 1088 225 1101 180 1115 157 1142 90 1156 88 1170 100 1190 153 1236 128 1280 130 1302 90 1340 60 1362 112 1385 70 1408 62 1440 64 1465 77 1484 58 1503 48 1530z" />
          </g>
        </svg>
        <button className="absolute left-[57px] top-[462px] size-[60px] rounded-full bg-[#fef1ea] flex items-center justify-center">
          <svg width="32" height="32" viewBox="0 0 32 32" fill="none" stroke="#e2570f" strokeWidth="3">
            <path d="M14 3H3v12M3 3l11 11M18 29h11V17M29 29 18 18" />
          </svg>
        </button>
      </div>
      <div className="h-[53px] flex items-center text-[25px] text-[#666] pt-[5px]">
        <i className="ml-[1px] size-[13px] bg-[#5aba43]" />
        <span className="ml-[9px]">套牢</span>
        <i className="ml-[39px] size-[13px] bg-[#e84848]" />
        <span className="ml-[9px]">获利</span>
      </div>
      <ChipRow label="获利比例" value="53.99%" />
      <ChipRow label="平均成本" value="10.03" />
      <div className="mt-[6px] mb-[7px] ml-[1px] w-[296px] h-[63px] rounded-[6px] bg-[#f7f8fa] p-[5px] flex text-[28px] whitespace-nowrap">
        <span className="w-[143px] h-[53px] rounded-[6px] bg-white font-semibold text-[#333] flex items-center justify-center">
          <span className="tracking-[-0.07em]">90%</span>筹码
        </span>
        <span className="flex-1 flex items-center justify-center text-[#666]">
          <span className="tracking-[-0.03em]">70%</span>筹码
        </span>
      </div>
      <ChipRow label="价格区间" value="9.15-10.79" />
      <ChipRow label="集中度" value="8.21%" />
      <ChipRow
        label={
          <>
            说明
            <i className="ml-[11px] size-[26px] rounded-full bg-[#c9c9c9] text-white text-[20px] font-bold not-italic flex items-center justify-center">i</i>
          </>
        }
        value="2025-12-23"
      />
    </div>
  );
}

function Banner() {
  return (
    <section className="mx-[16px] mt-[15px] h-[79px] shrink-0 rounded-full bg-[#fceee4] flex items-center text-[#e2570f] leading-none">
      <svg width="40" height="36" viewBox="0 0 40 36" fill="#ea5504" className="ml-[26px]">
        <path d="M0 11h4v13H0zM8 11h5L40 0v36l-8-3c-2 3-6 3-9 2l-4-2c-2-2-2-4-2-6l-4-2H8z" />
      </svg>
      <span className="ml-[46px] pt-[2px] text-[34px] whitespace-nowrap">
        打包<span className="tracking-[-0.01em]">500</span>家行业龙头，底仓配置优选<span className="tracking-[-0.01em]">&gt;&gt;</span>
      </span>
      <i className="ml-auto w-[2px] h-[32px] bg-[#e88b57]" />
      <svg width="28" height="28" viewBox="0 0 28 28" fill="none" stroke="#e2570f" strokeWidth="2.800" className="ml-[13px] mr-[35px]">
        <path d="M1 1l26 26M27 1 1 27" />
      </svg>
    </section>
  );
}

const INFO_TABS = ["股吧", "盘口", "资讯", "公告", "研报", "财务", "资料"];

function InfoTabs() {
  return (
    <nav className="mt-[14px] h-[93px] shrink-0 border-y-2 border-[#d9d9d9] pl-[33px] flex text-[37.500px] leading-[91px] text-[#666]">
      {INFO_TABS.map((t, i) => (
        <span key={t} className={`relative w-[144.800px] text-center ${i === 0 ? "text-[#e8560a]" : ""}`}>
          {t}
          {i === 0 && <i className="absolute left-[46px] bottom-[6px] w-[53px] h-[6px] rounded-full bg-[#e8560a]" />}
        </span>
      ))}
    </nav>
  );
}

function Cards() {
  return (
    <div className="h-[38px] shrink-0 pt-[11px] pl-[32px] flex gap-[16px] overflow-hidden">
      {[0, 1].map((k) => (
        <div key={k} className="w-[473px] h-[60px] shrink-0 rounded-[22px] overflow-hidden flex bg-gradient-to-r from-[#fef5f3] to-[#fef8f6]">
          <i className="ml-[36px] mt-[26px] size-[10px] rounded-full bg-[#d05050]" />
          <i className="ml-auto w-[198px] h-full bg-[#fdf0ee]" />
        </div>
      ))}
    </div>
  );
}

function NavItem({ label, children }: { label: string; children: ReactNode }) {
  return (
    <div className="w-[209.500px] flex flex-col items-center">
      <svg width="58" height="54" viewBox="0 0 58 54" fill="none" stroke="#666" strokeWidth="2.800" className="mt-[7px]">
        {children}
      </svg>
      <span className="mt-[15px] text-[30.500px]">{label}</span>
    </div>
  );
}

function BottomNav() {
  return (
    <footer className="h-[119px] shrink-0 border-t-2 border-[#d9d9d9] bg-[#f7f8fa] flex leading-none text-[#666]">
      <div className="w-[241px] flex flex-col items-center">
        <svg width="18" height="7" viewBox="0 0 18 7" className="mt-[7px]">
          <path d="M9 0l9 7H0z" fill="#777" />
        </svg>
        <span className="mt-[10px] text-[34px] text-[#e03131] tracking-[-0.04em]">3919.98</span>
        <div className="mt-[8px] self-start pl-[36px] flex items-center text-[31px] whitespace-nowrap">
          <span>上证</span>
          <span className="ml-[43px] text-[34px] text-[#e03131] tracking-[-0.05em]">0.07%</span>
        </div>
      </div>
      <NavItem label="交易">
        <path d="M16 7a24 24 0 0 1 37 26M53 33v6l3-3M42 47A24 24 0 0 1 5 20M5 20v-6l-3 3" />
        <path d="M20 16l9 10 9-10M29 26v15M20 27h18M20 33h18" strokeWidth="2.400" />
      </NavItem>
      <NavItem label="发帖">
        <path d="M38 3H12a6 6 0 0 0-6 6v36a6 6 0 0 0 6 6h34a6 6 0 0 0 6-6V16" />
        <path d="M23 34 46 8" strokeWidth="5.500" />
        <path d="M48 6l3-3" strokeWidth="5.500" />
      </NavItem>
      <NavItem label="功能">
        <rect x="7" y="5" width="20" height="20" rx="4" />
        <rect x="7" y="30" width="20" height="20" rx="4" />
        <rect x="31" y="30" width="20" height="20" rx="4" />
        <path d="M41 4 52 15 41 26 31 15z" strokeLinejoin="round" />
      </NavItem>
      <NavItem label="设自选">
        <circle cx="29" cy="27" r="23.500" />
        <g fill="#666" stroke="none">
          <circle cx="18.500" cy="27" r="2.800" />
          <circle cx="29" cy="27" r="2.800" />
          <circle cx="39.500" cy="27" r="2.800" />
        </g>
      </NavItem>
    </footer>
  );
}

function SystemBar() {
  return (
    <div className="h-[124px] shrink-0">
      <div className="ml-[48px] w-[978px] h-[2px] bg-[#e3e6ea]" />
      <div className="mt-[42px] flex items-center">
        <svg width="36" height="34" viewBox="0 0 36 34" stroke="#777" strokeWidth="3.800" strokeLinecap="round" className="ml-[274px]">
          <path d="M2 3h32M2 17h32M2 31h32" />
        </svg>
        <svg width="36" height="36" viewBox="0 0 36 36" fill="none" stroke="#777" strokeWidth="3.500" className="ml-[209px]">
          <rect x="2" y="2" width="32" height="32" rx="8.500" />
        </svg>
        <svg width="22" height="36" viewBox="0 0 22 36" fill="none" stroke="#777" strokeWidth="3.500" className="ml-[213px]">
          <path d="M19 2 3 18l16 16" />
        </svg>
      </div>
    </div>
  );
}

export default function App() {
  return (
    <div className="w-[1080px] h-[2400px] overflow-hidden flex flex-col bg-white font-['Inter','Noto_Sans_CJK_SC',sans-serif]">
      <StatusBar />
      <Header />
      <Quote />
      <News />
      <PeriodTabs />
      <MaBar />
      <main className="flex shrink-0 pl-[12px] h-[1173px]">
        <div className="w-[727px]">
          <PriceChart />
          <VolumeChart />
          <MacdChart />
          <DateAxis />
        </div>
        <Chips />
      </main>
      <Banner />
      <InfoTabs />
      <Cards />
      <BottomNav />
      <SystemBar />
    </div>
  );
}
